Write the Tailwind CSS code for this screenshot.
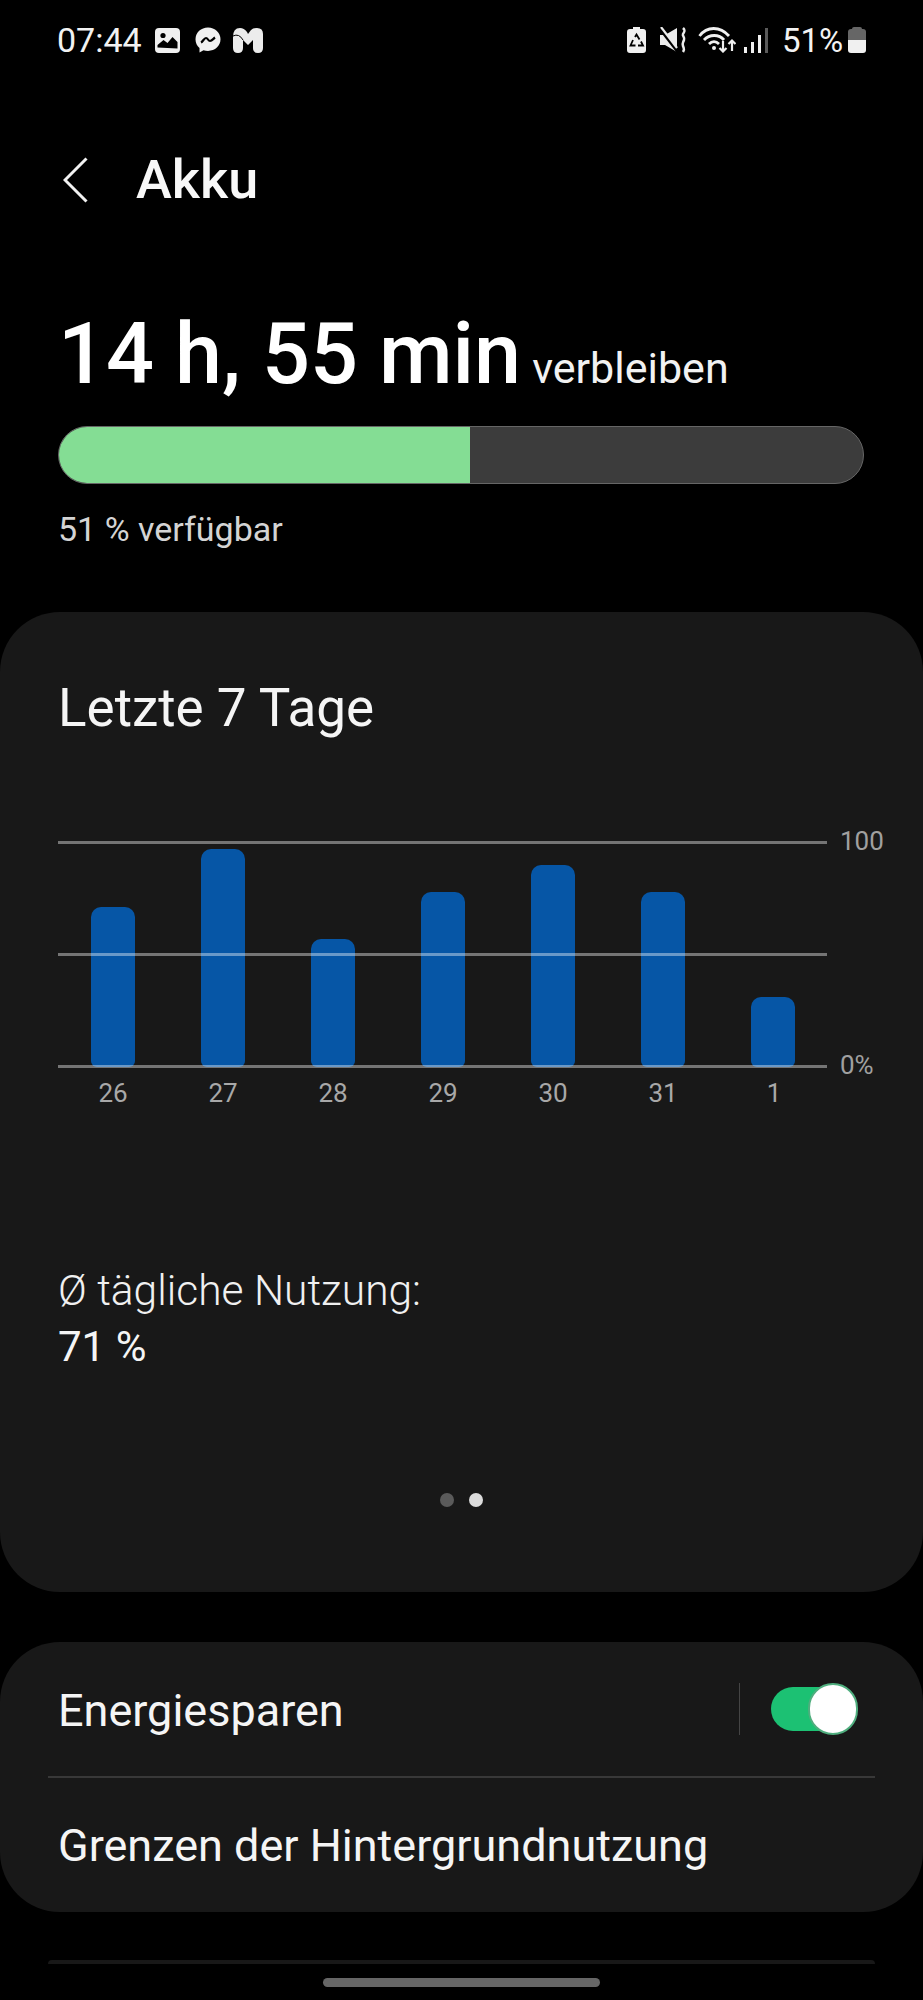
<!DOCTYPE html>
<html lang="de">
<head>
  <meta charset="UTF-8">
  <title>Akku</title>
  <script src="https://cdn.jsdelivr.net/npm/@tailwindcss/browser@4"></script>
</head>
<body class="bg-black text-white font-['Roboto',sans-serif] w-[923px] h-[2000px] overflow-hidden flex flex-col">

  <!-- Status bar -->
  <div class="h-[80px] shrink-0 pl-[57px] pr-[57px] flex items-center justify-between text-[#f2f2f2]">
    <div class="flex items-center">
      <span class="text-[34px] leading-none w-[98px]">07:44</span>
      <svg class="w-[25px] h-[25px]" viewBox="0 0 25 25"><rect width="25" height="25" rx="4" fill="#f0f0f0"/><path d="M2.500 19.500V17l6-5 4 3 5-6 5 5v6.500z" fill="#000"/><circle cx="8" cy="7.500" r="2.600" fill="#000"/></svg>
      <svg class="w-[26px] h-[26px] ml-[15px]" viewBox="0 0 26 26"><path d="M13 .5C6 .5.5 5.500.5 12.300c0 3.600 1.500 6.700 4 8.800V25.500l4-2.200c1.400.4 2.900.6 4.500.6 7 0 12.500-5 12.500-11.600S20 .5 13 .5z" fill="#f0f0f0"/><path d="M6 15.500c2-1 3-4.500 5-4.500s2 3 4 3 3.500-2.500 5-3.500" stroke="#000" stroke-width="2.200" fill="none"/></svg>
      <svg class="w-[30px] h-[26px] ml-[12px]" viewBox="0 0 30 26"><path d="M0 10Q0 1 7 1Q11 1 14 5L15 7L18 3Q20 1 24 1Q30 1 30 7V21Q30 26 25 26Q20 26 20 21V13L15 18L10 13V21Q10 26 5 26Q0 26 0 21Z" fill="#ececec"/><path d="M0 9Q6 6 10 13" stroke="#000" stroke-width="1" fill="none"/></svg>
    </div>
    <div class="flex items-center">
      <svg class="w-[19px] h-[26px]" viewBox="0 0 19 26"><path d="M6 0h7v2h3q3 0 3 3v18q0 3-3 3H3q-3 0-3-3V5q0-3 3-3h3z" fill="#f0f0f0"/><path d="M8 10l1.500-2.500 3 5M6 13l-2.500 5.500h5M11 18.500h5l-2-4" stroke="#000" stroke-width="1.800" fill="none"/></svg>
      <svg class="w-[27px] h-[26px] ml-[14px]" viewBox="0 0 27 26"><path d="M0 8h5L17 1V25L5 18H0z" fill="#ececec"/><path d="M1 3L18 25" stroke="#000" stroke-width="3"/><path d="M1 0L17 21" stroke="#ececec" stroke-width="2.200"/><path d="M23 1c3 3 1 4 0 6s2 3 1 6-2 3-1 6 2 3 0 6" stroke="#ececec" stroke-width="2.500" fill="none"/></svg>
      <svg class="w-[38px] h-[26px] ml-[11px]" viewBox="0 0 38 26"><path d="M1.500 9C9-1 22-1 31 9M6 13c5.500-6 15-6 20 0M11 17c3-3 7-3 10 0" stroke="#f0f0f0" stroke-width="2.800" fill="none"/><circle cx="16" cy="21" r="2" fill="#f0f0f0"/><path d="M25 14v10M21.500 21l3.500 3.500 3.500-3.500M34 24V14M30.500 17l3.500-3.500 3.500 3.500" stroke="#f0f0f0" stroke-width="2.200" fill="none"/></svg>
      <div class="flex items-end gap-[4px] h-[26px] ml-[8px] w-[24px]">
        <div class="w-[4px] h-[6px] bg-[#f0f0f0]"></div>
        <div class="w-[4px] h-[11px] bg-[#f0f0f0]"></div>
        <div class="w-[4px] h-[18px] bg-[#f0f0f0]"></div>
        <div class="w-[4px] h-[25px] bg-[#5a5a5a]"></div>
      </div>
      <span class="text-[33px] leading-none ml-[14px] w-[66px]">51%</span>
      <div class="w-[18px] h-[26px] flex flex-col">
        <div class="w-[10px] h-[2px] mx-auto bg-[#666] rounded-t-sm"></div>
        <div class="h-[11px] bg-[#666] rounded-t-[3px]"></div>
        <div class="h-[13px] bg-[#f0f0f0] rounded-b-[3px]"></div>
      </div>
    </div>
  </div>

  <!-- Title -->
  <div class="mt-[72px] pl-[63px] flex items-center h-[56px] shrink-0">
    <svg class="w-[25px] h-[46px]" viewBox="0 0 25 46"><path d="M23.500 1.500 L2 23 L23.500 44.500" stroke="#f2f2f2" stroke-width="3" fill="none"/></svg>
    <h1 class="ml-[48px] text-[54px] leading-none font-medium text-[#f8f8f8]">Akku</h1>
  </div>

  <!-- Remaining time -->
  <div class="mt-[101px] px-[58px] flex items-baseline h-[92px] shrink-0">
    <span class="text-[84.500px] leading-[92px] font-medium">14 h, 55 min</span>
    <span class="ml-[11px] text-[43px] leading-none text-[#f2f2f2]">verbleiben</span>
  </div>
  <div class="ml-[58px] mr-[59px] mt-[25px] h-[58px] shrink-0 rounded-full bg-[#3c3c3c] border border-[#666] overflow-hidden">
    <div class="w-[411px] h-full bg-[#84dd94]"></div>
  </div>
  <p class="mt-[26px] px-[58px] text-[34px] leading-[38px] text-[#d4d4d4]">51 % verfügbar</p>

  <!-- Last 7 days card -->
  <section class="mt-[64px] h-[980px] shrink-0 rounded-[60px] bg-[#181818] px-[58px] pt-[66px] flex flex-col">
    <h2 class="text-[53px] leading-[60px] text-[#f5f5f5]">Letzte 7 Tage</h2>

    <div class="mt-[103px] flex">
      <div class="w-[769px] shrink-0">
        <div class="relative h-[226px] flex items-end pl-[33px] gap-[66px]">
          <div class="w-[44px] h-[160px] bg-[#0656a6] rounded-t-[10px] rounded-b-[6px]"></div>
          <div class="w-[44px] h-[218px] bg-[#0656a6] rounded-t-[10px] rounded-b-[6px]"></div>
          <div class="w-[44px] h-[128px] bg-[#0656a6] rounded-t-[10px] rounded-b-[6px]"></div>
          <div class="w-[44px] h-[175px] bg-[#0656a6] rounded-t-[10px] rounded-b-[6px]"></div>
          <div class="w-[44px] h-[202px] bg-[#0656a6] rounded-t-[10px] rounded-b-[6px]"></div>
          <div class="w-[44px] h-[175px] bg-[#0656a6] rounded-t-[10px] rounded-b-[6px]"></div>
          <div class="w-[44px] h-[70px] bg-[#0656a6] rounded-t-[10px] rounded-b-[6px]"></div>
          <!-- grid lines sit on top of the bars -->
          <div class="absolute inset-x-0 top-0 h-[3px] bg-white/40"></div>
          <div class="absolute inset-x-0 top-[112px] h-[3px] bg-white/40"></div>
          <div class="absolute inset-x-0 top-[224px] h-[3px] bg-white/40"></div>
        </div>
        <div class="mt-[11px] flex pl-[33px] gap-[66px] text-[26px] leading-[30px] text-[#a8a8a8]">
          <span class="w-[44px] text-center">26</span>
          <span class="w-[44px] text-center">27</span>
          <span class="w-[44px] text-center">28</span>
          <span class="w-[44px] text-center">29</span>
          <span class="w-[44px] text-center">30</span>
          <span class="w-[44px] text-center">31</span>
          <span class="w-[44px] text-center ml-px">1</span>
        </div>
      </div>
      <div class="ml-[13px] h-[254px] -mt-[15px] flex flex-col justify-between text-[26px] leading-[30px] text-[#a0a0a0]">
        <span>100</span>
        <span>0%</span>
      </div>
    </div>

    <p class="mt-[155px] text-[42.500px] leading-[56px] font-light text-[#f0f0f0]">Ø tägliche Nutzung:</p>
    <p class="text-[42px] leading-[56px] text-[#f5f5f5]">71 %</p>

    <div class="mt-[118px] flex justify-center gap-[15px]">
      <div class="w-[14px] h-[14px] rounded-full bg-[#5a5a5a]"></div>
      <div class="w-[14px] h-[14px] rounded-full bg-[#dcdcdc]"></div>
    </div>
  </section>

  <!-- Settings card -->
  <section class="mt-[50px] h-[270px] shrink-0 rounded-[60px] bg-[#181818] px-[48px]">
    <div class="h-[136px] pl-[10px] flex items-center justify-between border-b-2 border-[#383838]">
      <span class="text-[45px] leading-[56px] pt-[3px] text-[#f5f5f5]">Energiesparen</span>
      <div class="flex items-center mr-[24px]">
        <div class="w-px h-[52px] bg-[#444]"></div>
        <div class="relative ml-[31px] w-[80px] h-[44px] rounded-full bg-[#1cc173]">
          <div class="absolute -right-[7px] -top-[4px] w-[50px] h-[52px] rounded-full bg-white border-2 border-[#4fae7e]"></div>
        </div>
      </div>
    </div>
    <div class="h-[132px] pl-[10px] flex items-center">
      <span class="text-[45px] leading-[56px] pt-[3px] text-[#f5f5f5]">Grenzen der Hintergrundnutzung</span>
    </div>
  </section>

  <!-- Next card peeking in -->
  <div class="mt-[48px] mx-[48px] h-[4px] shrink-0 rounded-t-full bg-[#181818]"></div>

  <!-- Home indicator -->
  <div class="mt-[14px] mx-auto w-[277px] h-[9px] shrink-0 rounded-full bg-[#666]"></div>

</body>
</html>
